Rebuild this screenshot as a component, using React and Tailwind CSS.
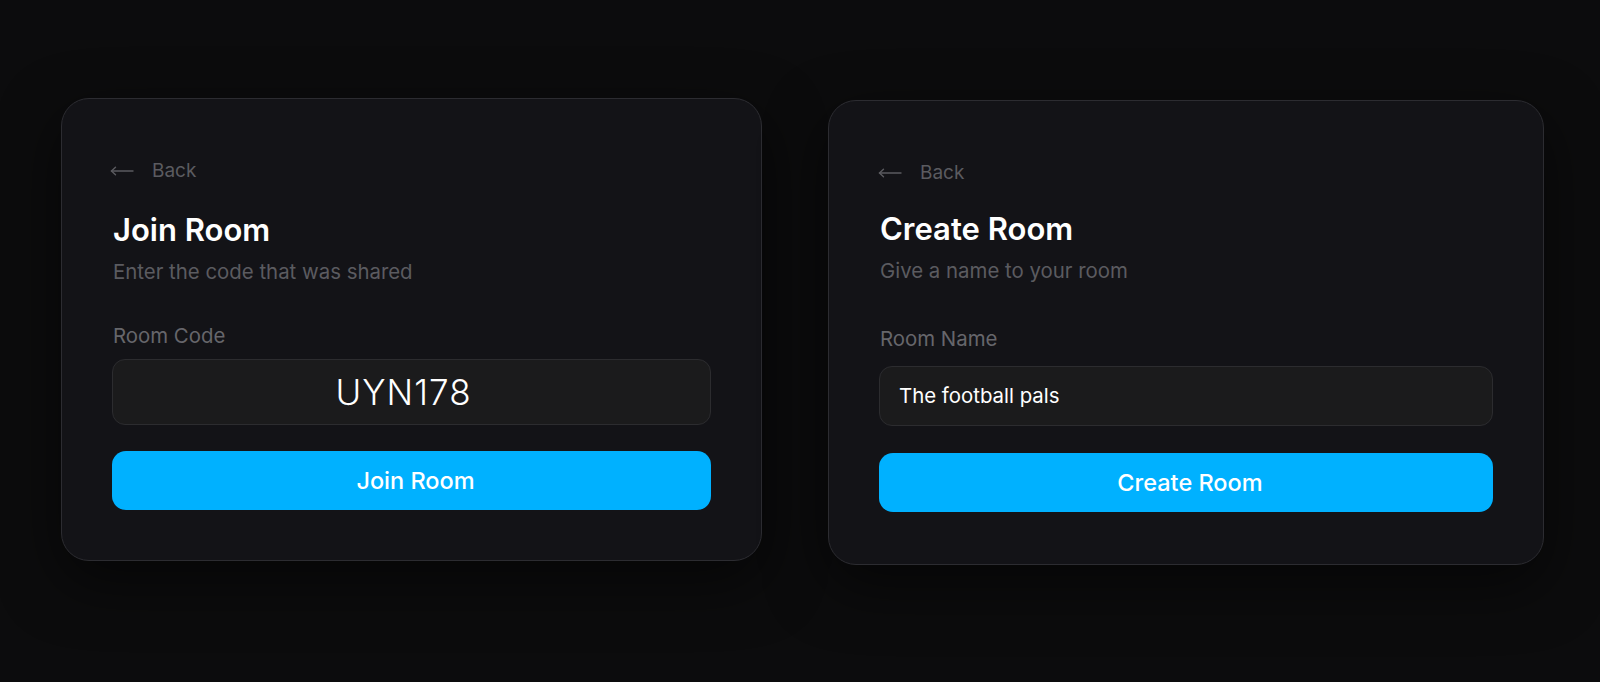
import React from 'react';

const BackLink = () => (
    <button className="flex items-center gap-[18px] h-6 text-[19px] leading-6 text-[#5b5b60]">
        <svg width="24" height="10" viewBox="0 0 24 10" fill="none" stroke="#5b5b60" strokeWidth="1.4" strokeLinecap="round">
            <path d="M1.5 5H23" />
            <path d="M5.5 1.2L1.5 5l4 3.8" />
        </svg>
        <span>Back</span>
    </button>
);

const RoomCard = ({ title, subtitle, label, value, action, centered, width, inputHeight, gaps }) => (
    <div
        className={`${width} ${gaps.bottom} shrink-0 rounded-[28px] border border-[#2c2c31] bg-[#131317] px-[50px] pt-[60px] shadow-[0_20px_60px_rgba(0,0,0,0.55)]`}
    >
        <div className={gaps.back}>
            <BackLink />
        </div>
        <h2 className={`${gaps.title} px-[1px] text-[31px] leading-10 font-semibold text-white`}>{title}</h2>
        <p className="mt-2 px-[1px] text-[20.4px] leading-7 text-[#5b5b60]">{subtitle}</p>
        <label className={`${gaps.label} block px-[1px] text-[20.4px] leading-7 text-[#66666b]`}>{label}</label>
        <div
            className={`${gaps.input} ${inputHeight} flex items-center rounded-[13px] border-[1.5px] border-[#2c2c2f] bg-[#1b1b1c] ${centered ? 'justify-center pr-4 text-[35px] tracking-[0.03em] font-light' : 'px-[19px] text-[20.4px]'} text-white`}
        >
            {value}
        </div>
        <button className={`${gaps.button} flex h-[59px] w-full items-center justify-center rounded-[14px] bg-[#00b1ff] pl-2 text-[23.5px] font-medium text-white`}>
            {action}
        </button>
    </div>
);

export default function App() {
    return (
        <div
            className="min-h-[682px] w-full bg-[#0c0c0d] pl-[61px] pt-[98px]"
            style={{ fontFamily: 'Inter, "Noto Sans", sans-serif' }}
        >
            <div className="flex items-start gap-[66px]">
                <RoomCard
                    title="Join Room"
                    subtitle="Enter the code that was shared"
                    label="Room Code"
                    value="UYN178"
                    action="Join Room"
                    centered
                    width="w-[701px]"
                    inputHeight="h-[66px]"
                    gaps={{ back: '-ml-[2px]', title: 'mt-[27px]', label: 'mt-9', input: 'mt-[9px]', button: 'mt-[26px]', bottom: 'pb-[50px]' }}
                />
                <div className="mt-[2px]">
                    <RoomCard
                        title="Create Room"
                        subtitle="Give a name to your room"
                        label="Room Name"
                        value="The football pals"
                        action="Create Room"
                        width="w-[716px]"
                        inputHeight="h-[60px]"
                        gaps={{ back: '-ml-[1px]', title: 'mt-6', label: 'mt-10', input: 'mt-[13px]', button: 'mt-[27px]', bottom: 'pb-[52px]' }}
                    />
                </div>
            </div>
        </div>
    );
}
